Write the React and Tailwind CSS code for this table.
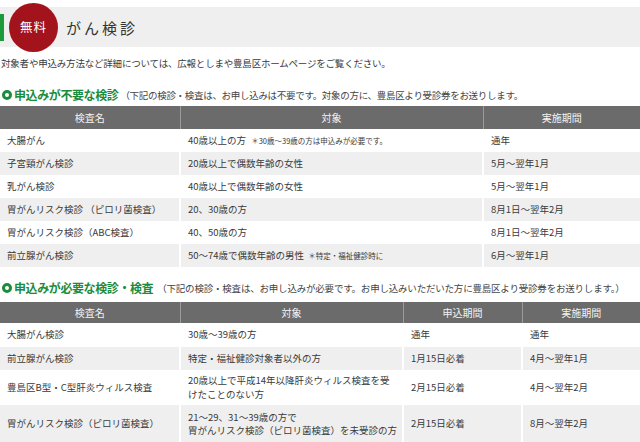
export default function App() {
  const rows1 = [
    ["大腸がん", <>40歳以上の方 <span className="text-[7.5px] ml-[3px]">＊30歳～39歳の方は申込みが必要です。</span></>, "通年"],
    ["子宮頸がん検診", "20歳以上で偶数年齢の女性", "5月～翌年1月"],
    ["乳がん検診", "40歳以上で偶数年齢の女性", "5月～翌年1月"],
    ["胃がんリスク検診 （ピロリ菌検査）", "20、30歳の方", "8月1日～翌年2月"],
    ["胃がんリスク検診（ABC検査）", "40、50歳の方", "8月1日～翌年2月"],
    ["前立腺がん検診", <>50～74歳で偶数年齢の男性 <span className="text-[7.5px] ml-[2px]">＊特定・福祉健診時に</span></>, "6月～翌年1月"],
  ];
  const rows2 = [
    { h: "h-[24px]", c: ["大腸がん検診", "30歳～39歳の方", "通年", "通年"] },
    { h: "h-[23px]", c: ["前立腺がん検診", "特定・福祉健診対象者以外の方", "1月15日必着", "4月～翌年1月"] },
    { h: "h-[35px]", c: ["豊島区B型・C型肝炎ウィルス検査", <>20歳以上で平成14年以降肝炎ウィルス検査を受<br />けたことのない方</>, "2月15日必着", "4月～翌年2月"] },
    { h: "h-[38px]", c: ["胃がんリスク検診（ピロリ菌検査）", <>21～29、31～39歳の方で<br />胃がんリスク検診（ピロリ菌検査）を未受診の方</>, "2月15日必着", "8月～翌年2月"] },
  ];
  const th = "bg-[#6b6b6b] text-[#f4f4f4] font-normal text-[10px] border-l border-[#9a9a9a] first:border-l-0 align-middle";
  const td = "px-[7px] text-[9.5px] leading-[13.5px] whitespace-nowrap border-l-2 border-white first:border-l-0 align-middle text-left";
  return (
    <div className="w-[640px] h-[442px] overflow-hidden bg-white text-[#3a3a3a] font-['Noto_Sans_CJK_JP',sans-serif]">
      <div className="mt-[7px] h-[40px] bg-[#efefef] flex items-center">
        <div className="w-[4px] h-[27px] bg-[#1c9a3c] shrink-0" />
        <div className="ml-[5px] w-[49px] h-[49px] rounded-full bg-[#a3131c] shrink-0 flex items-center justify-center text-white text-[12.5px] tracking-[1px]">
          無料
        </div>
        <div className="ml-[8px] text-[15px] tracking-[3px] text-[#333] mt-[2px]">がん検診</div>
      </div>
      <div className="mt-[9px] px-[1px] text-[9.5px] leading-[14px] tracking-[-0.2px]">
        対象者や申込み方法など詳細については、広報としまや豊島区ホームページをご覧ください。
      </div>
      <div className="mt-[17px] h-[16px] flex items-center whitespace-nowrap">
        <div className="ml-[2px] w-[10px] h-[10px] rounded-full border-[3px] border-[#1a8c3c] shrink-0" />
        <div className="ml-[2px] text-[12px] font-bold text-[#1a8c3c] tracking-[-0.4px]">申込みが不要な検診</div>
        <div className="ml-[2px] text-[9.5px] text-[#444] tracking-[-0.3px]">（下記の検診・検査は、お申し込みは不要です。対象の方に、豊島区より受診券をお送りします。</div>
      </div>
      <table className="mt-[3px] w-[640px] border-collapse table-fixed">
        <colgroup>
          <col className="w-[180px]" />
          <col className="w-[303px]" />
          <col className="w-[157px]" />
        </colgroup>
        <thead>
          <tr className="h-[23px]">
            <th className={th}>検査名</th>
            <th className={th}>対象</th>
            <th className={th}>実施期間</th>
          </tr>
        </thead>
        <tbody>
          {rows1.map((r, i) => (
            <tr key={i} className={"h-[23px] " + (i % 2 === 1 ? "bg-[#efefef]" : "bg-white")}>
              {r.map((c, j) => (
                <td key={j} className={td}>{c}</td>
              ))}
            </tr>
          ))}
        </tbody>
      </table>
      <div className="mt-[13px] h-[16px] flex items-center whitespace-nowrap">
        <div className="ml-[2px] w-[10px] h-[10px] rounded-full border-[3px] border-[#1a8c3c] shrink-0" />
        <div className="ml-[2px] text-[12px] font-bold text-[#1a8c3c] tracking-[-0.4px]">申込みが必要な検診・検査</div>
        <div className="ml-[4px] text-[9.5px] text-[#444] tracking-[-0.2px]">（下記の検診・検査は、お申し込みが必要です。お申し込みいただいた方に豊島区より受診券をお送りします。）</div>
      </div>
      <table className="mt-[6px] w-[640px] border-collapse table-fixed">
        <colgroup>
          <col className="w-[180px]" />
          <col className="w-[223px]" />
          <col className="w-[119px]" />
          <col className="w-[118px]" />
        </colgroup>
        <thead>
          <tr className="h-[21px]">
            <th className={th}>検査名</th>
            <th className={th}>対象</th>
            <th className={th}>申込期間</th>
            <th className={th}>実施期間</th>
          </tr>
        </thead>
        <tbody>
          {rows2.map((r, i) => (
            <tr key={i} className={r.h + " " + (i % 2 === 1 ? "bg-[#efefef]" : "bg-white")}>
              {r.c.map((c, j) => (
                <td key={j} className={td}>{c}</td>
              ))}
            </tr>
          ))}
        </tbody>
      </table>
    </div>
  );
}
